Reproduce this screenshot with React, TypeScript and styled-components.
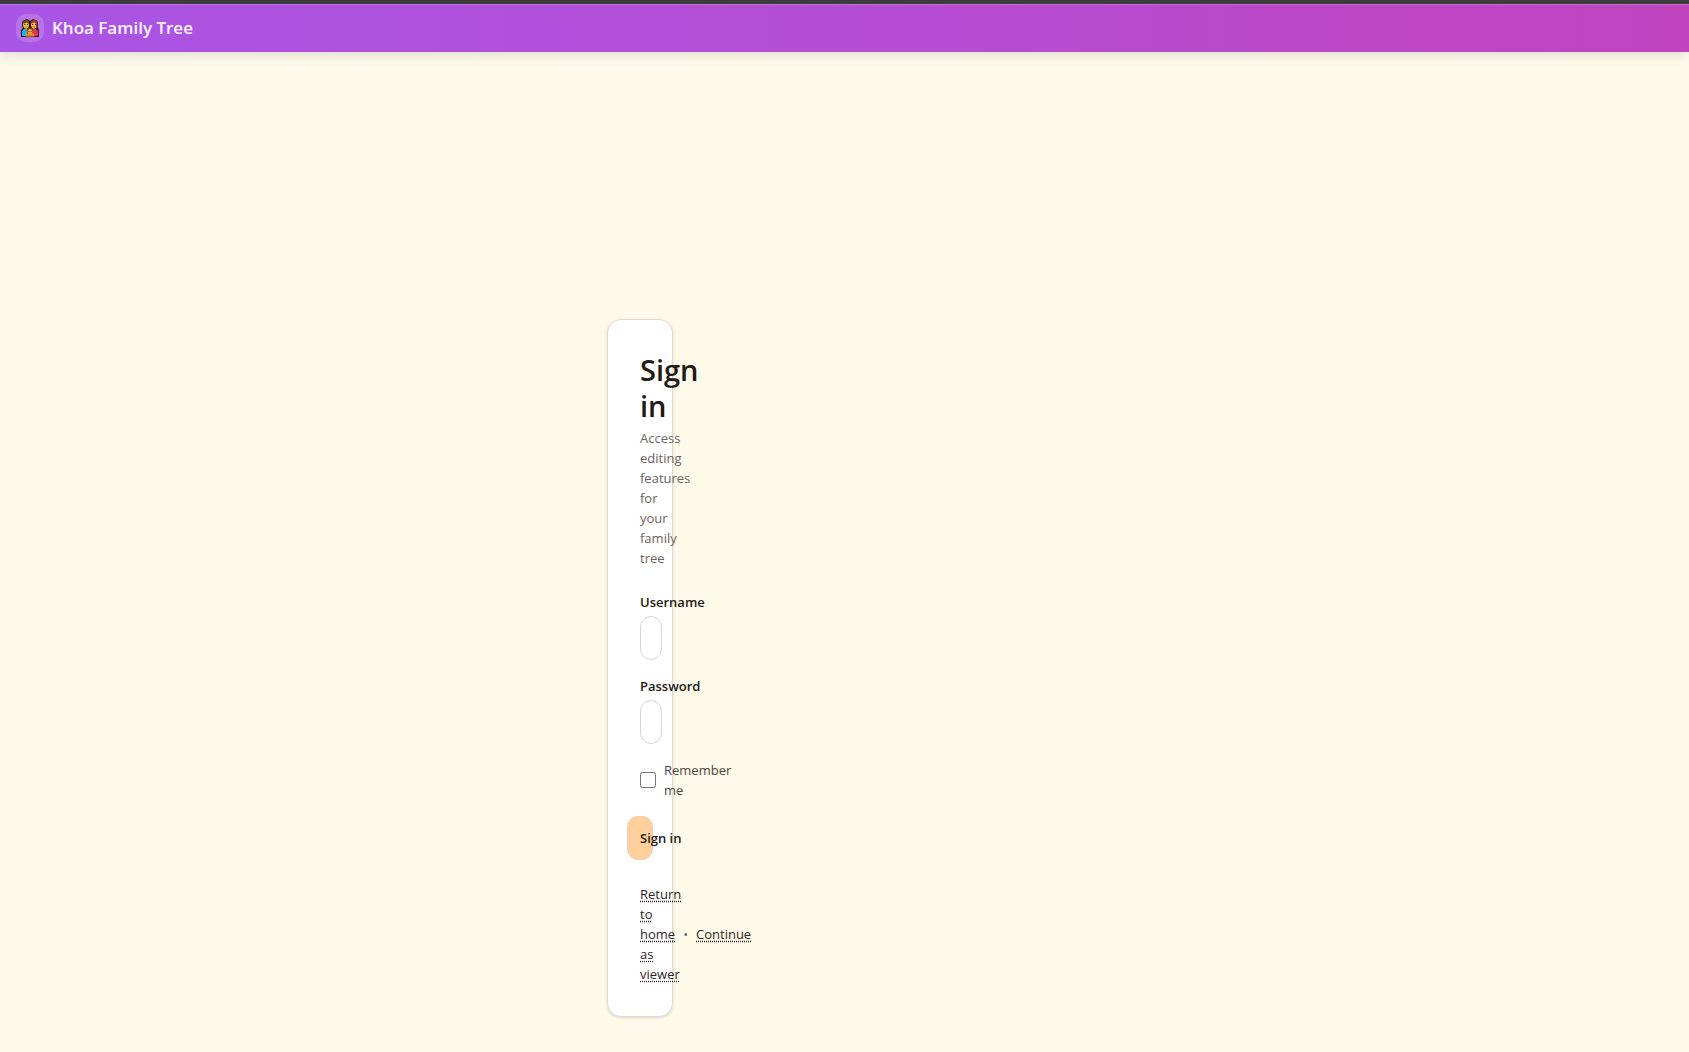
import React from "react";
import styled, { createGlobalStyle } from "styled-components";

const GlobalStyle = createGlobalStyle`
  *, *::before, *::after { box-sizing: border-box; }
  body {
    margin: 0;
    background: #fefaea;
    color: #231a14;
    font-family: "Segoe UI", "Open Sans", "Noto Sans", sans-serif;
    font-size: 14px;
    line-height: 20px;
  }
  h1, p { margin: 0; }
`;

const Header = styled.header`
  display: flex;
  align-items: center;
  gap: 8px;
  height: 52px;
  padding: 0 16px;
  border-top: 4px solid #3c3c3c;
  background: linear-gradient(90deg, #a955e6, #c044c0);
  box-shadow: inset 0 1px 0 rgba(255, 255, 255, 0.2), 0 3px 12px rgba(0, 0, 0, 0.12);
`;

const Logo = styled.span`
  display: grid;
  place-items: center;
  width: 28px;
  height: 28px;
  border-radius: 10px;
  background: rgba(255, 255, 255, 0.18);
`;

const Brand = styled.span`
  color: #fdf4ff;
  font-size: 17px;
  font-weight: 600;
  line-height: 28px;
`;

const Main = styled.main`
  display: flex;
  justify-content: center;
  max-width: 1280px;
  padding: 267px 16px 35px;
`;

const Card = styled.section`
  width: 66px;
  padding: 32px;
  border: 1px solid #dfdbd3;
  border-radius: 14px;
  background: #fff;
  box-shadow: 0 1px 3px rgba(0, 0, 0, 0.14);
`;

const Title = styled.h1`
  margin-bottom: 4px;
  font-size: 29px;
  font-weight: 600;
  line-height: 36px;
`;

const Description = styled.p`
  color: #6b635c;
  font-size: 13px;
`;

const Form = styled.form`
  display: flex;
  flex-direction: column;
  gap: 16px;
  margin: 24px 0;
`;

const Field = styled.div`
  display: grid;
  gap: 4px;
`;

const Label = styled.label`
  font-size: 13px;
  font-weight: 600;
`;

const Input = styled.input`
  width: 22px;
  height: 44px;
  padding: 10px;
  border: 1px solid #d6d6d6;
  border-radius: 11px;
  background: #fff;
  font: inherit;
`;

const Remember = styled.label`
  display: flex;
  align-items: center;
  gap: 8px;
  color: #50463f;
  font-size: 13px;
`;

const Checkbox = styled.input`
  flex: none;
  width: 16px;
  height: 16px;
  margin: 0;
`;

const Submit = styled.button`
  display: flex;
  align-self: center;
  align-items: center;
  width: 26px;
  height: 44px;
  padding: 0 12px;
  border: 1px solid #e8cfb5;
  border-radius: 11px;
  background: #ffd09b;
  color: #231a14;
  font: inherit;
  font-size: 13px;
  font-weight: 600;
  line-height: 20px;
  white-space: nowrap;
`;

const Links = styled.p`
  color: #6b635c;
  font-size: 13px;
`;

const Link = styled.a`
  color: #2e251f;
  text-decoration: underline dotted;
  text-underline-offset: 2px;
`;

const Dot = styled.span`
  padding: 0 8px;
`;

function FamilyIcon() {
  return (
    <svg width="18" height="18" viewBox="0 0 18 18" aria-hidden="true">
      <path d="M0 18v-7l2-2-1-2V3l2-2 3-1 3 2 3-2 3 1 2 2v6l1 2v7z" fill="#1b1713" />
      <path d="M1 17v-5l2-2h3v7z" fill="#20b4e8" />
      <path d="M12 17v-7h3l2 2v5z" fill="#ec2f63" />
      <path d="M2 4q0-2 3-2t3 2v3q-1 3-3 3T2 7z" fill="#f8b83a" />
      <path d="M10 4q0-2 3-2t3 2v3q-1 3-3 3t-3-3z" fill="#f8b83a" />
      <path d="M1.500 5V3l2-1.700L6 1l2 1.500V5L6 3.500z" fill="#6d4526" />
      <path d="M9.500 5V3l2-1.700 3-.3 2 2v6l-1.500-1V4.500l-2-1z" fill="#a53a31" />
      <path d="M4.500 17.500q0-4 4.500-4t4.500 4z" fill="#f58a24" />
      <circle cx="9" cy="12" r="3.300" fill="#8b3d18" />
      <circle cx="9" cy="12.500" r="2.500" fill="#f8a833" />
      <path d="M3.200 5.500h1M6 5.500h1M11 5.500h1M14 5.500h1M7.500 12.500h.8M9.700 12.500h.8" stroke="#1b1713" />
      <path d="M4 8h2M12 8h2" stroke="#a2541b" strokeWidth=".7" />
    </svg>
  );
}

export default function App() {
  return (
    <>
      <GlobalStyle />
      <Header>
        <Logo><FamilyIcon /></Logo>
        <Brand>Khoa Family Tree</Brand>
      </Header>
      <Main>
        <Card>
          <Title>Sign in</Title>
          <Description>Access editing features for your family tree</Description>
          <Form onSubmit={(event) => event.preventDefault()}>
            <Field>
              <Label htmlFor="username">Username</Label>
              <Input id="username" type="text" autoComplete="username" />
            </Field>
            <Field>
              <Label htmlFor="password">Password</Label>
              <Input id="password" type="password" autoComplete="current-password" />
            </Field>
            <Remember htmlFor="remember">
              <Checkbox id="remember" type="checkbox" />
              <span>Remember me</span>
            </Remember>
            <Submit type="submit">Sign in</Submit>
          </Form>
          <Links>
            <Link href="#home">Return to home</Link>
            <Dot>•</Dot>
            <Link href="#viewer">Continue as viewer</Link>
          </Links>
        </Card>
      </Main>
    </>
  );
}
